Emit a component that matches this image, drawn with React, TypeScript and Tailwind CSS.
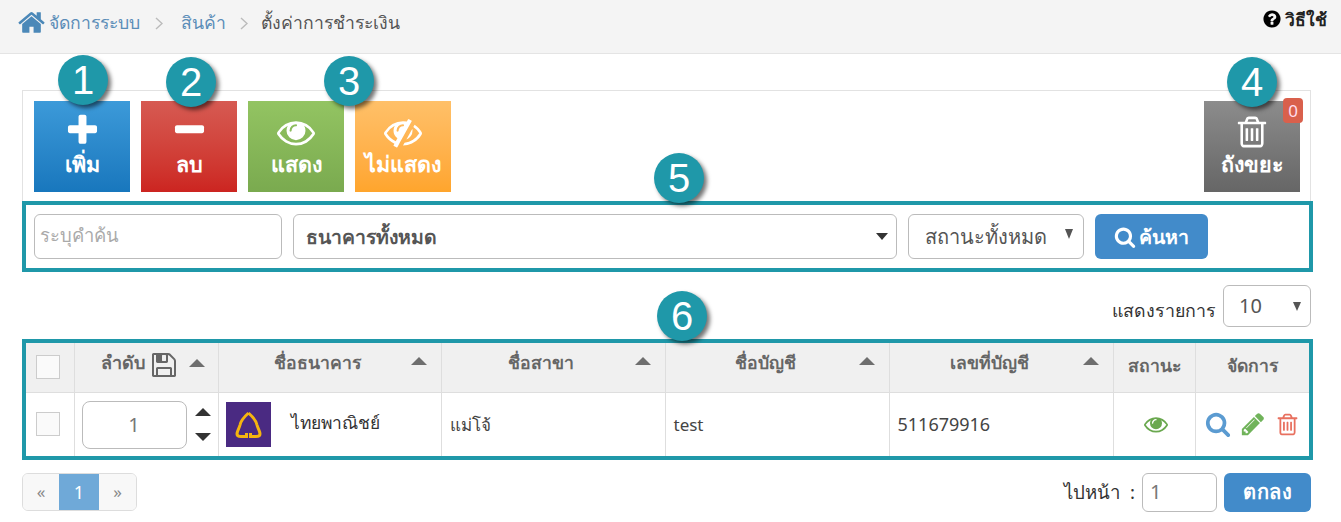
import { ReactNode } from 'react';

const PATHS = {
  home: 'M1472 992v480q0 26-19 45t-45 19h-384v-384h-256v384h-384q-26 0-45-19t-19-45v-480q0-1 .5-3t.5-3l575-474 575 474q1 2 1 6zm223-69l-62 74q-8 9-21 11h-3q-13 0-21-7l-692-577-692 577q-12 8-24 7-13-2-21-11l-62-74q-8-10-7-23.5t11-21.5l719-599q32-26 76-26t76 26l244 204v-195q0-14 9-23t23-9h192q14 0 23 9t9 23v408l219 182q10 8 11 21.5t-7 23.5z',
  plus: 'M1600 736v192q0 40-28 68t-68 28h-416v416q0 40-28 68t-68 28h-192q-40 0-68-28t-28-68v-416h-416q-40 0-68-28t-28-68v-192q0-40 28-68t68-28h416v-416q0-40 28-68t68-28h192q40 0 68 28t28 68v416h416q40 0 68 28t28 68z',
  minus: 'M1600 736v192q0 40-28 68t-68 28h-1216q-40 0-68-28t-28-68v-192q0-40 28-68t68-28h1216q40 0 68 28t28 68z',
  eye: 'M1664 960q-152-236-381-353 61 104 61 225 0 185-131.5 316.5t-316.5 131.5-316.5-131.5-131.5-316.5q0-121 61-225-229 117-381 353 133 205 333.5 326.5t434.5 121.5 434.5-121.5 333.5-326.5zm-720-384q0-20-14-34t-34-14q-125 0-214.5 89.5t-89.5 214.5q0 20 14 34t34 14 34-14 14-34q0-86 61-147t147-61q20 0 34-14t14-34zm848 384q0 34-20 69-140 230-376.5 368.5t-499.5 138.5-499.5-139-376.5-368q-20-35-20-69t20-69q140-229 376.5-368t499.5-139 499.5 139 376.5 368q20 35 20 69z',
  eyeSlash: 'M555 1335l78-141q-87-63-136-159t-49-203q0-121 61-225-229 117-381 353 167 258 427 375zm389-759q0-20-14-34t-34-14q-125 0-214.5 89.5t-89.5 214.5q0 20 14 34t34 14 34-14 14-34q0-86 61-147t147-61q20 0 34-14t14-34zm363-191q0 7-1 9-105 188-315 566t-316 567l-49 89q-10 16-28 16-12 0-134-70-16-10-16-28 0-12 44-87-143-65-263.5-173t-208.5-245q-20-31-20-69t20-69q153-235 380-371t496-136q89 0 180 17l54-97q10-16 28-16 5 0 18 6t31 15.5 33 18.5 31.5 18.5 19.5 11.5q16 10 16 27zm37 447q0 139-79 253.5t-209 164.5l280-502q8 45 8 84zm448 128q0 35-20 69-39 64-109 145-150 172-347.5 267t-419.5 95l74-132q212-18 392.5-137t301.5-307q-115-179-282-294l63-112q95 64 182.5 153t144.5 184q20 34 20 69z',
  trash: 'M704 736v576q0 14-9 23t-23 9h-64q-14 0-23-9t-9-23v-576q0-14 9-23t23-9h64q14 0 23 9t9 23zm256 0v576q0 14-9 23t-23 9h-64q-14 0-23-9t-9-23v-576q0-14 9-23t23-9h64q14 0 23 9t9 23zm256 0v576q0 14-9 23t-23 9h-64q-14 0-23-9t-9-23v-576q0-14 9-23t23-9h64q14 0 23 9t9 23zm128 724v-948h-896v948q0 22 7 40.5t14.5 27 10.5 8.5h832q3 0 10.5-8.5t14.5-27 7-40.5zm-672-1076h448l-48-117q-7-9-17-11h-317q-10 2-17 11zm928 32v64q0 14-9 23t-23 9h-96v948q0 83-47 143.5t-113 60.5h-832q-66 0-113-58.5t-47-141.5v-952h-96q-14 0-23-9t-9-23v-64q0-14 9-23t23-9h309l70-167q15-37 54-63t79-26h320q40 0 79 26t54 63l70 167h309q14 0 23 9t9 23z',
  search: 'M1216 832q0-185-131.5-316.5t-316.5-131.5-316.5 131.5-131.5 316.5 131.5 316.5 316.5 131.5 316.5-131.5 131.5-316.5zm512 832q0 52-38 90t-90 38q-54 0-90-38l-343-342q-179 124-399 124-143 0-273.5-55.5t-225-150-150-225-55.5-273.5 55.5-273.5 150-225 225-150 273.5-55.5 273.5 55.5 225 150 150 225 55.5 273.5q0 220-124 399l343 343q37 37 37 90z',
  save: 'M512 1536h768v-384h-768v384zm896 0h128v-896q0-14-10-38.5t-20-34.5l-281-281q-10-10-34-20t-39-10v416q0 40-28 68t-68 28h-576q-40 0-68-28t-28-68v-416h-128v1280h128v-416q0-40 28-68t68-28h832q40 0 68 28t28 68v416zm-384-928v-320q0-13-9.5-22.5t-22.5-9.5h-192q-13 0-22.5 9.5t-9.5 22.5v320q0 13 9.5 22.5t22.5 9.5h192q13 0 22.5-9.5t9.5-22.5zm640 32v928q0 40-28 68t-68 28h-1344q-40 0-68-28t-28-68v-1344q0-40 28-68t68-28h928q40 0 88 20t76 48l280 280q28 28 48 76t20 88z',
  pencil: 'M491 1536l91-91-235-235-91 91v107h128v128h107zm523-928q0-22-22-22-10 0-17 7l-542 542q-7 7-7 17 0 22 22 22 10 0 17-7l542-542q7-7 7-17zm-54-192l416 416-832 832h-416v-416zm683 96q0 53-37 90l-166 166-416-416 166-165q36-38 90-38 53 0 91 38l235 234q37 39 37 91z',
  question: 'M1024 1376v-192q0-14-9-23t-23-9h-192q-14 0-23 9t-9 23v192q0 14 9 23t23 9h192q14 0 23-9t9-23zm256-672q0-88-55.5-163t-138.5-116-170-41q-243 0-371 213-15 24 8 42l132 100q7 6 19 6 16 0 25-12 53-68 86-92 34-24 86-24 48 0 85.5 26t37.5 59q0 38-20 61t-68 45q-63 28-115.5 86.5t-52.5 125.5v36q0 14 9 23t23 9h192q14 0 23-9t9-23q0-19 21.5-49.5t54.5-49.5q32-18 49-28.5t46-35 44.5-48 28-60.5 12.5-81zm384 192q0 209-103 385.5t-279.5 279.5-385.5 103-385.5-103-279.5-279.5-103-385.5 103-385.5 279.5-279.5 385.5-103 385.5 103 279.5 279.5 103 385.5z',
};

const Icon = ({ name, size, className = '' }: { name: keyof typeof PATHS; size: number; className?: string }) => (
  <svg width={size} height={size} viewBox="0 0 1792 1792" fill="currentColor" className={`shrink-0 ${className}`}>
    <path d={PATHS[name]} />
  </svg>
);

const Badge = ({ n, className }: { n: number; className: string }) => (
  <div
    className={`absolute flex h-[50px] w-[50px] items-center justify-center rounded-full bg-[#1f98a9] font-['Liberation_Sans',sans-serif] text-[40px] leading-none text-white shadow-[3px_3px_4px_rgba(0,0,0,0.55)] ${className}`}
  >
    {n}
  </div>
);

const ToolButton = ({ label, icon, className }: { label: string; icon: ReactNode; className: string }) => (
  <div className={`flex h-[91px] w-[96px] flex-col items-center pt-[12px] text-white ${className}`}>
    <div className="flex h-[38px] items-center justify-center">{icon}</div>
    <div className="mt-[-2px] text-[21.5px] leading-[30px] font-semibold whitespace-nowrap">{label}</div>
  </div>
);

const SortUp = () => (
  <span className="h-0 w-0 border-x-[8px] border-b-[8px] border-x-transparent border-b-[#6e6e6e]" />
);

const Chevron = ({ className }: { className: string }) => (
  <svg width="8" height="13" viewBox="0 0 8 13" fill="none" stroke="#bbb" strokeWidth="1.4" className={className}>
    <path d="M1 1l6 5.5-6 5.5" />
  </svg>
);

const HeadCell = ({ label }: { label: string }) => (
  <th className="border-r border-b border-[#dedede] bg-[#f0f0f0] p-0">
    <div className="relative flex h-[49px] items-center justify-center pr-[24px] pb-[10px] text-[17.6px] font-bold text-[#666]">
      {label}
      <span className="absolute top-[14px] right-[14px] flex">
        <SortUp />
      </span>
    </div>
  </th>
);

export default function App() {
  return (
    <div className="relative h-[522px] w-[1341px] overflow-hidden bg-white font-['Noto_Sans','Liberation_Sans',sans-serif] text-[#333]">
      <header className="flex h-[54px] justify-between border-b border-[#e4e4e4] bg-[#f4f4f4] pr-[14px] pl-[17px]">
        <nav className="flex h-[44px] items-center text-[17.6px] text-[#5b8db8]">
          <Icon name="home" size={29} className="mr-[3px] text-[#4b88b8]" />
          <span>จัดการระบบ</span>
          <Chevron className="mt-[2px] mr-[18px] ml-[15px]" />
          <span>สินค้า</span>
          <Chevron className="mt-[2px] mr-[13px] ml-[14px]" />
          <span className="text-[#555]">ตั้งค่าการชำระเงิน</span>
        </nav>
        <div className="flex h-[38px] items-center gap-[3px] text-[17.5px] font-semibold text-[#222]">
          <Icon name="question" size={20} className="text-black" />
          วิธีใช้
        </div>
      </header>

      <main className="px-[22px] pt-[36px]">
        <section className="flex h-[111px] w-[1289px] justify-between border-x border-t border-[#e2e2e2] pt-[10px] pr-[10px] pl-[11px]">
          <div className="flex gap-[11px]">
            <ToolButton label="เพิ่ม" icon={<Icon name="plus" size={37} className="-mt-[4px]" />} className="bg-gradient-to-b from-[#3c9ad9] to-[#1877bd]" />
            <ToolButton label="ลบ" icon={<Icon name="minus" size={37} className="-mt-[4px]" />} className="bg-gradient-to-b from-[#d65a52] to-[#cc2420]" />
            <ToolButton label="แสดง" icon={<Icon name="eye" size={38} />} className="bg-gradient-to-b from-[#93c462] to-[#7aaa4f]" />
            <ToolButton label="ไม่แสดง" icon={<Icon name="eyeSlash" size={38} />} className="bg-gradient-to-b from-[#ffc068] to-[#ffa52c]" />
          </div>
          <div className="relative">
            <ToolButton label="ถังขยะ" icon={<Icon name="trash" size={36} />} className="bg-gradient-to-b from-[#8c8c8c] to-[#666]" />
            <span className="absolute -top-[3px] -right-[3px] flex h-[25px] w-[20px] items-center justify-center rounded-[4px] bg-[#d9604c] text-[17px] text-[#fde]">
              0
            </span>
          </div>
        </section>

        <section className="flex h-[71px] w-[1291px] items-center gap-[11px] border-4 border-[#1f98a9] px-[8px]">
          <div className="flex h-[45px] w-[248px] items-center rounded-[6px] border border-[#bbb] px-[5px] pb-[3px] text-[18.4px] text-[#aaa]">
            ระบุคำค้น
          </div>
          <div className="flex h-[45px] w-[604px] items-center justify-between rounded-[6px] border border-[#bbb] pr-[8px] pl-[12px] text-[19.4px] font-semibold text-[#555]">
            ธนาคารทั้งหมด
            <span className="h-0 w-0 border-x-[6.5px] border-t-[7px] border-x-transparent border-t-[#333]" />
          </div>
          <div className="flex h-[45px] w-[176px] items-center justify-between rounded-[6px] border border-[#bbb] pr-[10px] pl-[16px] text-[20px] text-[#555]">
            สถานะทั้งหมด
            <span className="mb-[5px] h-0 w-0 border-x-[4px] border-t-[10px] border-x-transparent border-t-[#555]" />
          </div>
          <div className="flex h-[45px] w-[113px] items-center justify-center gap-[3px] rounded-[6px] bg-[#428bca] text-[19.5px] font-semibold text-white">
            <Icon name="search" size={22} />
            ค้นหา
          </div>
        </section>

        <div className="flex h-[67px] w-[1289px] items-center justify-end gap-[7px]">
          <span className="pt-[10px] text-[17.8px] text-[#333]">แสดงรายการ</span>
          <div className="flex h-[42px] w-[88px] items-center justify-between rounded-[6px] border border-[#bbb] pr-[9px] pl-[15px] text-[20px] text-[#555]">
            10
            <span className="mt-[2px] h-0 w-0 border-x-[4.5px] border-t-[9px] border-x-transparent border-t-[#555]" />
          </div>
        </div>

        <section className="w-[1291px] border-4 border-[#1f98a9]">
          <table className="w-full table-fixed border-collapse">
            <colgroup>
              <col className="w-[48px]" />
              <col className="w-[144px]" />
              <col className="w-[223px]" />
              <col className="w-[224px]" />
              <col className="w-[224px]" />
              <col className="w-[224px]" />
              <col className="w-[82px]" />
              <col />
            </colgroup>
            <thead>
              <tr>
                <th className="border-r border-b border-[#dedede] bg-[#f0f0f0] p-0">
                  <div className="flex h-[49px] items-center justify-center pr-[4px] pb-[1px]">
                    <span className="h-[24px] w-[24px] border border-[#ccc] bg-[#fafafa]" />
                  </div>
                </th>
                <th className="border-r border-b border-[#dedede] bg-[#f0f0f0] p-0">
                  <div className="flex h-[49px] items-center justify-center gap-[7px] pb-[6px] pl-[13px] text-[18px] font-bold text-[#666]">
                    <span className="pb-[4px]">ลำดับ</span>
                    <Icon name="save" size={28} className="-mx-[2px]" />
                    <span className="ml-[6px] flex pb-[3px]"><SortUp /></span>
                  </div>
                </th>
                <HeadCell label="ชื่อธนาคาร" />
                <HeadCell label="ชื่อสาขา" />
                <HeadCell label="ชื่อบัญชี" />
                <HeadCell label="เลขที่บัญชี" />
                <th className="border-r border-b border-[#dedede] bg-[#f0f0f0] p-0 pb-[5px] text-[17.6px] font-bold text-[#666]">สถานะ</th>
                <th className="border-b border-[#dedede] bg-[#f0f0f0] p-0 pb-[5px] text-[17.6px] font-bold text-[#666]">จัดการ</th>
              </tr>
            </thead>
            <tbody>
              <tr className="h-[63px] text-[17px] text-[#444]">
                <td className="border-r border-[#dedede] p-0">
                  <div className="flex justify-center pr-[4px]">
                    <span className="h-[24px] w-[24px] border border-[#ccc] bg-[#fafafa]" />
                  </div>
                </td>
                <td className="border-r border-[#dedede] p-0">
                  <div className="flex items-center pt-[1px] pl-[7px]">
                    <div className="flex h-[48px] w-[105px] items-center justify-center rounded-[8px] border border-[#bbb] text-[20px] text-[#777]">
                      1
                    </div>
                    <div className="ml-[8px] flex flex-col gap-[17px]">
                      <span className="h-0 w-0 border-x-[8px] border-b-[8px] border-x-transparent border-b-[#333]" />
                      <span className="h-0 w-0 border-x-[8px] border-t-[8px] border-x-transparent border-t-[#333]" />
                    </div>
                  </div>
                </td>
                <td className="border-r border-[#dedede] p-0">
                  <div className="flex items-center pl-[7px]">
                    <div className="flex h-[45px] w-[45px] items-center justify-center bg-[#4a2a82]">
                      <svg width="45" height="45" viewBox="0 0 45 45" fill="none" stroke="#f5b50f" strokeWidth="3">
                        <path d="M22.5 11 C18 15 15 18 14 23 C13 27 11 29 11 32 C11 34 13 34.5 15 34.5 L20.5 34.5 L20.5 31 M22.5 11 C27 15 30 18 31 23 C32 27 34 29 34 32 C34 34 32 34.5 30 34.5 L24.5 34.5 L24.5 31" />
                      </svg>
                    </div>
                    <span className="mb-[4px] ml-[20px] text-[17.4px] text-[#333]">ไทยพาณิชย์</span>
                  </div>
                </td>
                <td className="border-r border-[#dedede] pl-[8px]">แม่โจ้</td>
                <td className="border-r border-[#dedede] pl-[8px]">test</td>
                <td className="border-r border-[#dedede] pl-[8px] text-[18px]">511679916</td>
                <td className="border-r border-[#dedede] p-0">
                  <div className="flex justify-center pl-[3px]">
                    <Icon name="eye" size={24} className="text-[#6aa84f]" />
                  </div>
                </td>
                <td className="p-0">
                  <div className="flex items-center justify-center gap-[9px] pl-[1px]">
                    <Icon name="search" size={26} className="text-[#5b9bd1]" />
                    <Icon name="pencil" size={26} className="text-[#70b35a]" />
                    <Icon name="trash" size={25} className="text-[#e8705f]" />
                  </div>
                </td>
              </tr>
            </tbody>
          </table>
        </section>

        <footer className="mt-[13px] flex w-[1289px] items-center justify-between">
          <div className="flex h-[38px] w-[115px] overflow-hidden rounded-[6px] border border-[#ddd] text-[#888]">
            <span className="flex w-[36px] items-center justify-center bg-[#f8f8f8] text-[17px]">«</span>
            <span className="flex w-[40px] items-center justify-center bg-[#6fa9d8] text-[18px] text-white">1</span>
            <span className="flex flex-1 items-center justify-center bg-[#f8f8f8] text-[17px]">»</span>
          </div>
          <div className="flex items-center gap-[7px]">
            <span className="text-[18.6px] text-[#333]">ไปหน้า&nbsp;&nbsp;:</span>
            <div className="flex h-[39px] w-[75px] items-center rounded-[6px] border border-[#bbb] px-[7px] text-[20px] text-[#777]">1</div>
            <div className="flex h-[39px] w-[87px] items-center justify-center rounded-[6px] bg-[#428bca] text-[20px] font-semibold tracking-[0.5px] text-white">ตกลง</div>
          </div>
        </footer>
      </main>

      <Badge n={1} className="top-[55px] left-[58px]" />
      <Badge n={2} className="top-[57px] left-[166px]" />
      <Badge n={3} className="top-[56px] left-[324px]" />
      <Badge n={4} className="top-[57px] left-[1227px]" />
      <Badge n={5} className="top-[153px] left-[654px]" />
      <Badge n={6} className="top-[291px] left-[657px]" />
    </div>
  );
}
